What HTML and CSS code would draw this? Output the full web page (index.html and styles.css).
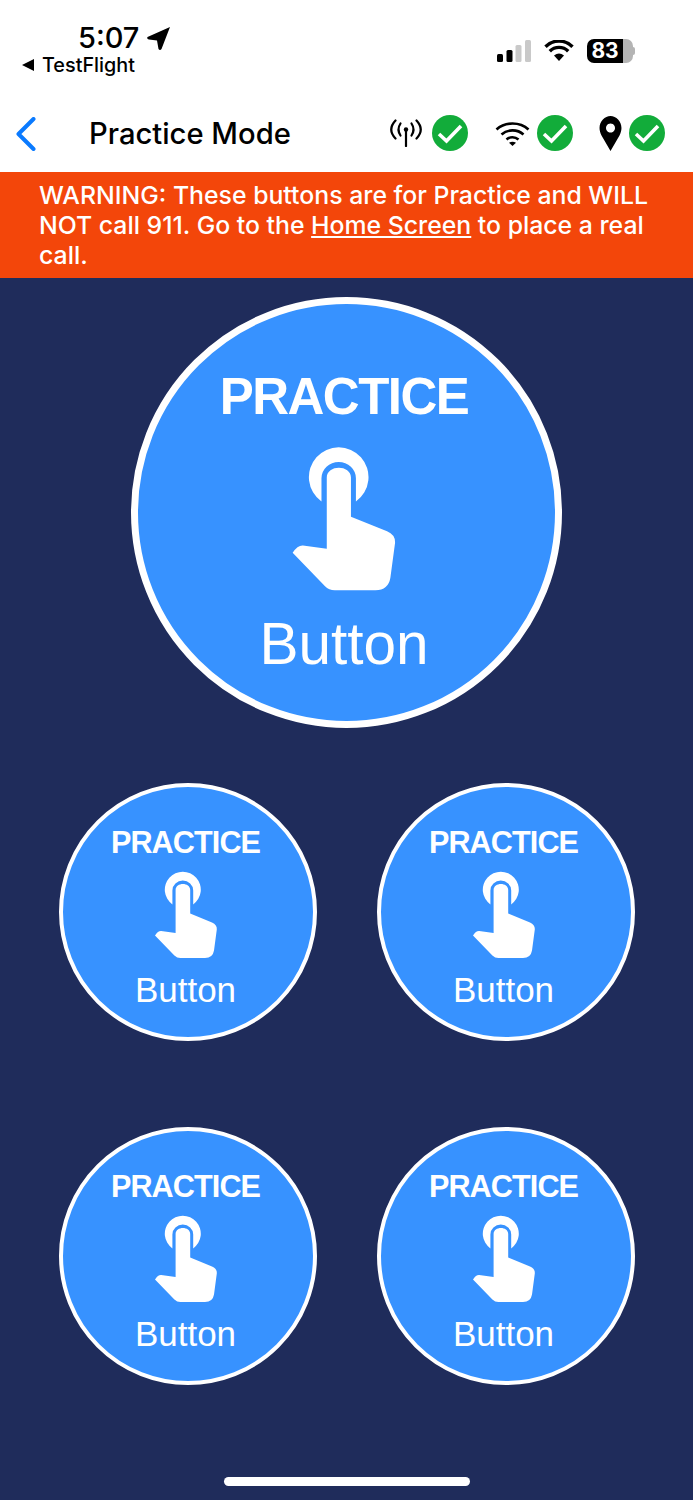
FILE: index.html
```html
<!DOCTYPE html>
<html lang="en">
  <head>
    <meta charset="UTF-8" />
    <meta name="viewport" content="width=device-width, initial-scale=1" />
    <title>Practice Mode</title>
    <link rel="stylesheet" href="styles.css">
  </head>
  <body>
    <svg class="defs" width="0" height="0" aria-hidden="true">
      <symbol id="hand" viewBox="270 75 320 440">
        <path d="M362 242A90 90 0 1 1 466 242V172A51 48 0 0 0 362 172Z" />
        <path d="M378 385V170C378 130 451 130 451 170V288L560 332Q586 343 584 368L570 472Q564 509 525 510H402Q385 510 372 497L275 397Q290 374 306 375Z" />
      </symbol>
      <symbol id="check" viewBox="0 0 36 36">
        <circle cx="18" cy="18" r="18" fill="#12ac3a" />
        <path d="M7 19L14.5 26L29 11" fill="none" stroke="#fff" stroke-width="3.6" />
      </symbol>
    </svg>

    <div class="status-bar">
      <div class="status-left">
        <div class="clock">
          <span>5:07</span>
          <svg class="arrow" viewBox="0 0 23 23">
            <path d="M23 0L.5 10Q-.5 12 2 12.5L10 13.5L11.5 22Q13 24 14.5 22Z" />
          </svg>
        </div>
        <div class="back-app">
          <svg class="back-tri" viewBox="0 0 12 12"><path d="M0 6L12 0V12Z" /></svg>
          <span>TestFlight</span>
        </div>
      </div>
      <div class="status-right">
        <svg class="signal" viewBox="0 0 34 22">
          <rect x="0" y="14" width="6" height="8" rx="1.5" />
          <rect x="9.5" y="10" width="6" height="12" rx="1.5" />
          <rect x="18.5" y="5" width="6" height="17" rx="1.5" fill="#c9c9c9" />
          <rect x="28" y="0" width="6" height="22" rx="1.5" fill="#c9c9c9" />
        </svg>
        <svg class="wifi" viewBox="0 0 30 21">
          <path d="M15 21L10 15.5Q15 11.5 20 15.5Z" />
          <path d="M5.8 11.2A13 13 0 0 1 24.2 11.2" fill="none" stroke="#000" stroke-width="3.4" />
          <path d="M1.5 6.7A19 19 0 0 1 28.5 6.7" fill="none" stroke="#000" stroke-width="3.4" />
        </svg>
        <div class="battery">
          <span class="battery-level">83</span>
          <span class="battery-rest"></span>
          <span class="battery-tip"></span>
        </div>
      </div>
    </div>

    <header class="nav-bar">
      <svg class="back" viewBox="0 0 20 34">
        <path d="M17.5 2L2.5 17L17.5 32" fill="none" stroke="#0a7aff" stroke-width="4" stroke-linecap="round" stroke-linejoin="round" />
      </svg>
      <h1>Practice Mode</h1>
      <div class="checks">
        <div class="check-item check-cell">
          <svg class="ic-antenna" viewBox="0 0 32 28" fill="none" stroke="#000" stroke-width="2.2" stroke-linecap="round">
            <circle cx="16" cy="10.5" r="2.2" fill="#000" stroke="none" />
            <path d="M16 11V27" />
            <path d="M10.5 4.5Q6.5 10.5 10.5 16.5M21.5 4.5Q25.5 10.5 21.5 16.5" />
            <path d="M5.5 1.5Q-3 10.5 5.5 19.5M26.500 1.5Q35 10.5 26.500 19.5" />
          </svg>
          <svg class="ok"><use href="#check" /></svg>
        </div>
        <div class="check-item check-wifi">
          <svg class="ic-wifi" viewBox="0 0 35 25" fill="none" stroke="#000" stroke-width="2.6">
            <path d="M1.5 8.5C10 .5 25 .5 33.5 8.5" />
            <path d="M6.5 13.5C12.5 8 22.5 8 28.5 13.5" />
            <path d="M11.5 18.5C15 15.5 20 15.5 23.5 18.5" />
            <path d="M17.5 25L14 21.8Q17.5 19.5 21 21.8Z" fill="#000" stroke="none" />
          </svg>
          <svg class="ok"><use href="#check" /></svg>
        </div>
        <div class="check-item check-pin">
          <svg class="ic-pin" viewBox="0 0 23 35">
            <path fill-rule="evenodd" d="M11.5 35L2.5 19.5C-3 9 4 0 11.5 0S26 9 20.5 19.5ZM11.5 7.5a4.5 4.5 0 1 0 .01 0Z" />
          </svg>
          <svg class="ok"><use href="#check" /></svg>
        </div>
      </div>
    </header>

    <div class="warning">
      <div>WARNING: These buttons are for Practice and WILL</div>
      <div>NOT call 911. Go to the <u>Home Screen</u> to place a real</div>
      <div>call.</div>
    </div>

    <main class="practice">
      <button class="call-btn call-btn-big">
        <span class="call-top">PRACTICE</span>
        <svg class="hand"><use href="#hand" /></svg>
        <span class="call-bottom">Button</span>
      </button>
      <div class="btn-grid">
        <button class="call-btn">
          <span class="call-top">PRACTICE</span>
          <svg class="hand"><use href="#hand" /></svg>
          <span class="call-bottom">Button</span>
        </button>
        <button class="call-btn">
          <span class="call-top">PRACTICE</span>
          <svg class="hand"><use href="#hand" /></svg>
          <span class="call-bottom">Button</span>
        </button>
        <button class="call-btn">
          <span class="call-top">PRACTICE</span>
          <svg class="hand"><use href="#hand" /></svg>
          <span class="call-bottom">Button</span>
        </button>
        <button class="call-btn">
          <span class="call-top">PRACTICE</span>
          <svg class="hand"><use href="#hand" /></svg>
          <span class="call-bottom">Button</span>
        </button>
      </div>
      <div class="home-bar"></div>
    </main>
  </body>
</html>
```

FILE: styles.css
```css
* {
  box-sizing: border-box;
}

body {
  font-family: "Inter", "Liberation Sans", sans-serif;
  margin: 0;
  padding: 0;
  background: #1f2c5b;
  color: #000;
  height: 1500px;
  overflow: hidden;
}

.defs {
  display: block;
  height: 0;
}

/* status bar */
.status-bar {
  background: #fff;
  height: 100px;
  display: flex;
  justify-content: space-between;
}

.status-left {
  padding: 22px 0 0 22px;
}

.clock {
  display: flex;
  align-items: center;
  gap: 8px;
  margin-left: 56px;
  font-size: 29px;
  font-weight: 500;
  line-height: 32px;
}

.arrow {
  width: 23px;
  height: 23px;
}

.back-app {
  display: flex;
  align-items: center;
  gap: 8px;
  font-size: 19.8px;
  font-weight: 500;
  line-height: 22px;
}

.back-tri {
  width: 12px;
  height: 12px;
}

.status-right {
  display: flex;
  align-items: center;
  padding: 1px 58px 0 0;
  height: 100%;
}

.signal {
  width: 34px;
  height: 22px;
  margin-right: 13px;
}

.wifi {
  width: 30px;
  height: 21px;
  margin-right: 13px;
}

.battery {
  display: flex;
  align-items: center;
  height: 24px;
}

.battery-level {
  width: 36px;
  height: 24px;
  background: #000;
  color: #fff;
  border-radius: 7px 0 0 7px;
  font-size: 21px;
  font-weight: 700;
  line-height: 24px;
  text-align: center;
}

.battery-rest {
  width: 10px;
  height: 24px;
  background: #b4b4b4;
  border-radius: 0 7px 7px 0;
}

.battery-tip {
  width: 2px;
  height: 8px;
  background: #b4b4b4;
  border-radius: 0 2px 2px 0;
}

/* nav */
.nav-bar {
  background: #fff;
  height: 72px;
  display: flex;
  align-items: flex-start;
}

.back {
  width: 20px;
  height: 34px;
  margin: 17px 0 0 16px;
}

h1 {
  margin: 16px 0 0 53px;
  font-size: 29.2px;
  font-weight: 500;
  line-height: 36px;
}

.checks {
  display: flex;
  margin-left: auto;
  padding: 15px 28px 0 0;
}

.check-item {
  display: flex;
  align-items: center;
  height: 36px;
}

.check-cell {
  gap: 10px;
}

.check-wifi {
  gap: 7px;
  margin-left: 27px;
}

.check-pin {
  gap: 7px;
  margin-left: 26px;
}

.ok {
  width: 36px;
  height: 36px;
}

.ic-antenna {
  width: 32px;
  height: 28px;
}

.ic-wifi {
  width: 35px;
  height: 25px;
}

.ic-pin {
  width: 23px;
  height: 35px;
}

.warning {
  background: #f3460a;
  color: #fff;
  height: 106px;
  padding: 8px 0 0 39px;
  font-size: 24.8px;
  font-weight: 500;
  line-height: 30px;
  white-space: nowrap;
}

/* buttons */
.practice {
  height: 1222px;
  padding-top: 19px;
  display: flex;
  flex-direction: column;
  align-items: center;
}

.call-btn {
  width: 258px;
  height: 258px;
  padding: 0 5px 0 0;
  border: 4px solid #fff;
  border-radius: 50%;
  background: #3792ff;
  color: #fff;
  font-family: "Liberation Sans", sans-serif;
  display: flex;
  flex-direction: column;
  align-items: center;
}

.call-top {
  margin-top: 38px;
  font-size: 30.6px;
  font-weight: 700;
  line-height: 34px;
  letter-spacing: -0.9px;
}

.hand {
  width: 64px;
  height: 88px;
  margin-top: 12px;
  fill: #fff;
}

.call-bottom {
  margin-top: 11px;
  font-size: 35px;
  line-height: 40px;
}

.call-btn-big {
  width: 431px;
  height: 431px;
  border-width: 7px;
}

.call-btn-big .call-top {
  margin-top: 65px;
  font-size: 51px;
  line-height: 56px;
  letter-spacing: -1.5px;
}

.call-btn-big .hand {
  width: 106px;
  height: 146px;
  margin-top: 21px;
}

.call-btn-big .call-bottom {
  margin-top: 19px;
  font-size: 58.5px;
  line-height: 66px;
}

.btn-grid {
  display: grid;
  grid-template-columns: 258px 258px;
  column-gap: 60px;
  row-gap: 86px;
  margin-top: 55px;
  margin-left: 1px;
}

.home-bar {
  width: 246px;
  height: 9px;
  margin-top: 92px;
  background: #fff;
  border-radius: 5px;
}
```
